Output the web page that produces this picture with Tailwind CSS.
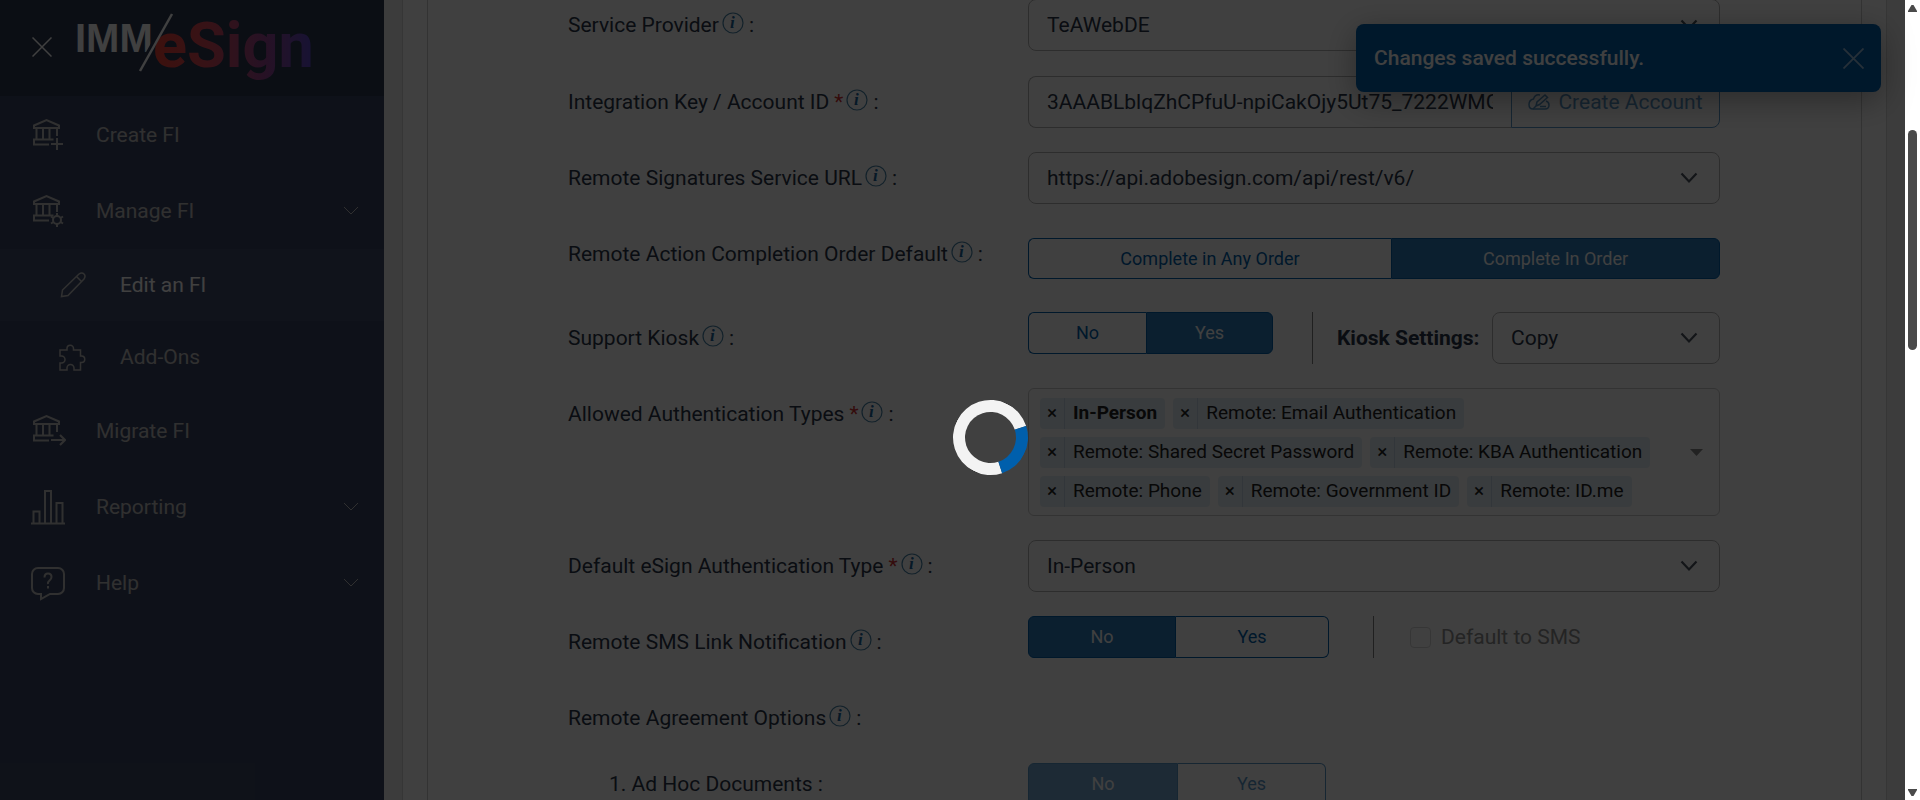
<!DOCTYPE html>
<html lang="en">
<head>
    <meta charset="UTF-8">
    <meta name="viewport" content="width=device-width, initial-scale=1.0">
    <title>IMM eSign - Edit an FI</title>
    <script src="https://cdn.jsdelivr.net/npm/@tailwindcss/browser@4"></script>
</head>
<body class="relative flex h-screen overflow-hidden bg-white font-['Roboto',sans-serif] text-[21px] leading-[24px] text-[#2b3648]">

    <!-- shared icons -->
    <svg class="hidden" aria-hidden="true">
        <symbol id="bank" viewBox="0 0 34 34" fill="none" stroke="currentColor" stroke-width="2">
            <path d="M2 10V7.500L14.500 2 27 7.500V10ZM4.500 10v11M11 10v11M17.500 10v11M25 10v8M2 21.500h19.500M2 20.500V26.500h15"/>
        </symbol>
        <symbol id="info" viewBox="0 0 22 22">
            <circle cx="11" cy="11" r="10" fill="none" stroke="#4a84a8" stroke-width="1.200"/>
            <text x="8" y="16" font-family="Liberation Serif, serif" font-style="italic" font-weight="bold" font-size="17" fill="#1a649a">i</text>
        </symbol>
        <symbol id="down" viewBox="0 0 18 12">
            <path d="M1.500 1.500 9 9.500l7.500-8" fill="none" stroke="#4c545f" stroke-width="2.200"/>
        </symbol>
        <symbol id="thin-down" viewBox="0 0 16 10">
            <path d="M1 1l7 7 7-7" fill="none" stroke="currentColor" stroke-width="1"/>
        </symbol>
    </svg>

    <!-- Sidebar -->
    <aside class="w-[384px] shrink-0 bg-[#3b4663] text-[#c0c0c0]">
        <div class="flex h-24 bg-[#2d3852]">
            <button class="mt-[37px] ml-8 size-5 text-white" aria-label="Close menu">
                <svg viewBox="0 0 20 20" class="size-5" fill="none" stroke="currentColor" stroke-width="1.500"><path d="M.5.5l19 19M19.500.5l-19 19"/></svg>
            </button>
            <svg class="ml-5 h-24 w-[252px]" viewBox="72 0 252 96" role="img" aria-label="IMM eSign">
                <defs>
                    <linearGradient id="brand" gradientUnits="userSpaceOnUse" x1="156" y1="0" x2="310" y2="0">
                        <stop offset="0" stop-color="#f04438"/>
                        <stop offset=".35" stop-color="#d84a5c"/>
                        <stop offset=".7" stop-color="#9a4690"/>
                        <stop offset="1" stop-color="#6048c8"/>
                    </linearGradient>
                </defs>
                <text x="75" y="52" font-family="Liberation Sans, Arial, sans-serif" font-weight="bold" font-size="40" fill="#fff">IMM</text>
                <path d="M172 14 140 71" stroke="#2d3852" stroke-width="8"/>
                <text x="153" y="67" font-family="Roboto, sans-serif" font-weight="700" font-size="63" fill="url(#brand)">eSign</text>
                <path d="M172 14 140 71" stroke="#fff" stroke-width="2.500"/>
            </svg>
        </div>
        <nav class="mt-px">
            <a href="#" class="flex h-[76px] items-center">
                <svg class="ml-8 size-[34px]" fill="none" stroke="currentColor" stroke-width="2"><use href="#bank"/><path d="M25 20v12M19 26h12"/></svg>
                <span class="ml-[30px]">Create FI</span>
            </a>
            <a href="#" class="flex h-[76px] items-center">
                <svg class="ml-8 size-[34px]" fill="none" stroke="currentColor" stroke-width="2"><use href="#bank"/><circle cx="25" cy="26" r="4"/><path d="M25 19v3M25 30v3M19 22.500l2.500 1.500M28.500 28l2.500 1.500M19 29.500l2.500-1.500M28.500 24l2.500-1.500"/></svg>
                <span class="ml-[30px] flex-1">Manage FI</span>
                <svg class="mr-[25px] h-[10px] w-4"><use href="#thin-down"/></svg>
            </a>
            <a href="#" class="flex h-[72px] items-center bg-[#424e6d]">
                <svg class="ml-[60px] size-[26px]" viewBox="0 0 26 26" fill="none" stroke="currentColor" stroke-width="1.500"><path d="M1.500 24.500l1-6.500L19 2q3-2 5 0t0 5L8 23.500ZM16.500 4.500l5 5"/></svg>
                <span class="ml-[34px] text-white">Edit an FI</span>
            </a>
            <a href="#" class="flex h-[72px] items-center">
                <svg class="ml-[59px] size-[27px]" viewBox="0 0 27 27" fill="none" stroke="currentColor" stroke-width="1.500"><path d="M1 6h7V4.500a3 3 0 0 1 6.500 0V6H21.500v6h1a3 3 0 0 1 0 6.500h-1V26H15v-2a3.500 3.500 0 0 0-7 0v2H1v-7h1.500a3.500 3.500 0 0 0 0-7H1Z"/></svg>
                <span class="ml-[34px]">Add-Ons</span>
            </a>
            <a href="#" class="flex h-[76px] items-center">
                <svg class="ml-8 size-[34px]" fill="none" stroke="currentColor" stroke-width="2"><use href="#bank"/><path d="M19 26h14M28 21l5 5-5 5"/></svg>
                <span class="ml-[30px]">Migrate FI</span>
            </a>
            <a href="#" class="flex h-[76px] items-center">
                <svg class="ml-[31px] size-[35px]" viewBox="0 0 35 35" fill="none" stroke="currentColor" stroke-width="2"><path d="M0 33.500h34M2.500 33V21.500h6V33M14 33V1h6v32M25.500 33V13h6v20"/></svg>
                <span class="ml-[30px] flex-1">Reporting</span>
                <svg class="mr-[25px] h-[10px] w-4"><use href="#thin-down"/></svg>
            </a>
            <a href="#" class="flex h-[76px] items-center">
                <svg class="ml-[31px] size-[35px]" viewBox="0 0 35 35" fill="none" stroke="currentColor" stroke-width="2"><path d="M7 2h20a6 6 0 0 1 6 6v14a6 6 0 0 1-6 6h-8l-9 5v-5H7a6 6 0 0 1-6-6V8a6 6 0 0 1 6-6Z"/><path d="M13.500 11.500q0-4 3.500-4t3.500 3.500q0 2-2 3.500t-1.500 3.500M17 20v2.500"/></svg>
                <span class="ml-[30px] flex-1">Help</span>
                <svg class="mr-[25px] h-[10px] w-4"><use href="#thin-down"/></svg>
            </a>
        </nav>
    </aside>

    <!-- Form -->
    <main class="h-full min-w-0 flex-1 overflow-hidden bg-[#f0f0f0] px-[18px]">
        <div class="h-full border-x border-[#d8d8d8] bg-white px-6">
            <form class="flex min-h-full flex-col gap-6 border-x border-[#cccccc] pr-px">

                <div class="-mt-px mb-px grid grid-cols-[460px_minmax(0,692px)] justify-center">
                    <label for="provider" class="flex h-[52px] items-center">Service Provider <svg class="mb-1 ml-[3px] size-[22px]"><use href="#info"/></svg><span class="ml-[5px]">:</span></label>
                    <div class="relative">
                        <select id="provider" class="h-[52px] w-full appearance-none rounded-lg border border-[#b4b4b4] px-[18px]"><option>TeAWebDE</option></select>
                        <svg class="pointer-events-none absolute top-5 right-[22px] h-3 w-[18px]"><use href="#down"/></svg>
                    </div>
                </div>

                <div class="grid grid-cols-[460px_minmax(0,692px)] justify-center">
                    <label for="key" class="flex h-[52px] items-center">Integration Key / Account ID <span class="ml-[5px] text-[#d03030]">*</span><svg class="mb-1 ml-[3px] size-[22px]"><use href="#info"/></svg><span class="ml-[5px]">:</span></label>
                    <div class="flex h-[52px]">
                        <div class="min-w-0 flex-1 rounded-l-lg border border-r-0 border-[#b4b4b4] px-[18px]">
                            <input id="key" type="text" value="3AAABLblqZhCPfuU-npiCakOjy5Ut75_7222WMGk8" class="h-[50px] w-full outline-none">
                        </div>
                        <button type="button" class="flex w-[209px] items-center justify-center gap-2 rounded-r-lg border border-[#005fac] text-[#005fac] opacity-65">
                            <svg class="h-[18px] w-[22px]" viewBox="0 0 22 18" fill="none" stroke="currentColor" stroke-width="1.500"><path d="M12 2Q7 1 5.500 6 1 7 1 11.500T5 16h12q4 0 4-4 0-3-3-4"/><path d="M8 13l1-4 8-7 2.500 2.500-8 7ZM5 16l3-3M12 13.500h6"/></svg>
                            Create Account
                        </button>
                    </div>
                </div>

                <div class="grid grid-cols-[460px_minmax(0,692px)] justify-center">
                    <label for="url" class="flex h-[52px] items-center">Remote Signatures Service URL <svg class="mb-1 ml-[3px] size-[22px]"><use href="#info"/></svg><span class="ml-[5px]">:</span></label>
                    <div class="relative">
                        <select id="url" class="h-[52px] w-full appearance-none rounded-lg border border-[#b4b4b4] px-[18px]"><option>https://api.adobesign.com/api/rest/v6/</option></select>
                        <svg class="pointer-events-none absolute top-5 right-[22px] h-3 w-[18px]"><use href="#down"/></svg>
                    </div>
                </div>

                <div class="grid h-[60px] grid-cols-[460px_minmax(0,692px)] justify-center">
                    <span id="order" class="flex h-[52px] items-center">Remote Action Completion Order Default <svg class="mb-1 ml-[3px] size-[22px]"><use href="#info"/></svg><span class="ml-[5px]">:</span></span>
                    <div role="group" aria-labelledby="order" class="mt-[10px] flex h-[41px] text-[18px]">
                        <button type="button" aria-pressed="false" class="w-[363px] rounded-l-md border border-r-0 border-[#005fac] text-[#005fac]">Complete in Any Order</button>
                        <button type="button" aria-pressed="true" class="flex-1 rounded-r-md border border-[#005fac] bg-[#2c7cbc] text-white">Complete In Order</button>
                    </div>
                </div>

                <div class="grid grid-cols-[460px_minmax(0,692px)] justify-center">
                    <span id="kiosk" class="flex h-[52px] items-center">Support Kiosk <svg class="mb-1 ml-[3px] size-[22px]"><use href="#info"/></svg><span class="ml-[5px]">:</span></span>
                    <div class="flex h-[52px]">
                        <div role="group" aria-labelledby="kiosk" class="flex h-[42px] text-[18px]">
                            <button type="button" aria-pressed="false" class="w-[118px] rounded-l-md border border-r-0 border-[#005fac] text-[#005fac]">No</button>
                            <button type="button" aria-pressed="true" class="w-[127px] rounded-r-md border border-[#005fac] bg-[#2c7cbc] text-white">Yes</button>
                        </div>
                        <div class="ml-[39px] w-px bg-[#808080]"></div>
                        <label for="kiosk-settings" class="ml-6 flex-1 self-center font-bold">Kiosk Settings:</label>
                        <div class="relative w-[228px]">
                            <select id="kiosk-settings" class="h-[52px] w-full appearance-none rounded-lg border border-[#b4b4b4] px-[18px]"><option>Copy</option></select>
                            <svg class="pointer-events-none absolute top-5 right-[22px] h-3 w-[18px]"><use href="#down"/></svg>
                        </div>
                    </div>
                </div>

                <div class="grid grid-cols-[460px_minmax(0,692px)] justify-center">
                    <span class="flex h-[52px] items-center">Allowed Authentication Types <span class="ml-[5px] text-[#d03030]">*</span><svg class="mb-1 ml-[3px] size-[22px]"><use href="#info"/></svg><span class="ml-[5px]">:</span></span>
                    <div class="flex h-32 items-center rounded-md border border-[#cccccc] py-2 pr-4 pl-[11px] text-[19px] text-[#222222]">
                        <div class="flex flex-1 flex-wrap gap-2">
                            <span class="flex h-[31px] items-center rounded bg-[#e4eef6]"><button type="button" class="h-full w-[25px] border-r border-[#c8d8e8]" aria-label="Remove">×</button><span class="px-2 font-bold">In-Person</span></span>
                            <span class="flex h-[31px] items-center rounded bg-[#e4eef6]"><button type="button" class="h-full w-[25px] border-r border-[#c8d8e8]" aria-label="Remove">×</button><span class="px-2">Remote: Email Authentication</span></span>
                            <span class="flex h-[31px] items-center rounded bg-[#e4eef6]"><button type="button" class="h-full w-[25px] border-r border-[#c8d8e8]" aria-label="Remove">×</button><span class="px-2">Remote: Shared Secret Password</span></span>
                            <span class="flex h-[31px] items-center rounded bg-[#e4eef6]"><button type="button" class="h-full w-[25px] border-r border-[#c8d8e8]" aria-label="Remove">×</button><span class="px-2">Remote: KBA Authentication</span></span>
                            <span class="flex h-[31px] items-center rounded bg-[#e4eef6]"><button type="button" class="h-full w-[25px] border-r border-[#c8d8e8]" aria-label="Remove">×</button><span class="px-2">Remote: Phone</span></span>
                            <span class="flex h-[31px] items-center rounded bg-[#e4eef6]"><button type="button" class="h-full w-[25px] border-r border-[#c8d8e8]" aria-label="Remove">×</button><span class="px-2">Remote: Government ID</span></span>
                            <span class="flex h-[31px] items-center rounded bg-[#e4eef6]"><button type="button" class="h-full w-[25px] border-r border-[#c8d8e8]" aria-label="Remove">×</button><span class="px-2">Remote: ID.me</span></span>
                        </div>
                        <svg class="h-[7px] w-[13px]" viewBox="0 0 13 7"><path d="M0 0h13L6.500 7Z" fill="#888"/></svg>
                    </div>
                </div>

                <div class="grid grid-cols-[460px_minmax(0,692px)] justify-center">
                    <label for="auth-type" class="flex h-[52px] items-center">Default eSign Authentication Type <span class="ml-[5px] text-[#d03030]">*</span><svg class="mb-1 ml-[3px] size-[22px]"><use href="#info"/></svg><span class="ml-[5px]">:</span></label>
                    <div class="relative">
                        <select id="auth-type" class="h-[52px] w-full appearance-none rounded-lg border border-[#b4b4b4] px-[18px]"><option>In-Person</option></select>
                        <svg class="pointer-events-none absolute top-5 right-[22px] h-3 w-[18px]"><use href="#down"/></svg>
                    </div>
                </div>

                <div class="grid grid-cols-[460px_minmax(0,692px)] justify-center">
                    <span id="sms" class="flex h-[52px] items-center">Remote SMS Link Notification <svg class="mb-1 ml-[3px] size-[22px]"><use href="#info"/></svg><span class="ml-[5px]">:</span></span>
                    <div class="flex h-[42px] items-center">
                        <div role="group" aria-labelledby="sms" class="flex h-[42px] text-[18px]">
                            <button type="button" aria-pressed="true" class="w-[148px] rounded-l-md border border-[#005fac] bg-[#2c7cbc] text-white">No</button>
                            <button type="button" aria-pressed="false" class="w-[153px] rounded-r-md border border-l-0 border-[#005fac] text-[#005fac]">Yes</button>
                        </div>
                        <div class="ml-11 h-full w-px bg-[#808080]"></div>
                        <input id="default-sms" type="checkbox" disabled class="ml-9 size-[21px] appearance-none rounded border border-[#d8d8d8]">
                        <label for="default-sms" class="ml-[10px] text-[#909090]">Default to SMS</label>
                    </div>
                </div>

                <div class="-mb-[5px] grid grid-cols-[460px_minmax(0,692px)] justify-center">
                    <span class="flex h-[52px] items-center">Remote Agreement Options <svg class="mb-1 ml-[3px] size-[22px]"><use href="#info"/></svg><span class="ml-[5px]">:</span></span>
                </div>

                <div class="grid grid-cols-[460px_minmax(0,692px)] justify-center">
                    <span id="adhoc" class="flex h-[42px] items-center pl-[41px]">1. Ad Hoc Documents :</span>
                    <div role="group" aria-labelledby="adhoc" class="flex h-[42px] text-[18px] opacity-65">
                        <button type="button" disabled class="w-[150px] rounded-l-md border border-[#005fac] bg-[#2c7cbc] text-white">No</button>
                        <button type="button" disabled class="w-[148px] rounded-r-md border border-l-0 border-[#005fac] text-[#005fac]">Yes</button>
                    </div>
                </div>
            </form>
        </div>
    </main>

    <!-- Toast -->
    <div role="status" class="absolute top-6 right-[39px] flex h-[68px] w-[525px] items-center justify-between rounded-lg bg-[#005fac] pr-[17px] pl-[18px] font-medium text-white shadow-[0_8px_32px_rgba(0,0,0,0.35)]">
        Changes saved successfully.
        <button type="button" aria-label="Dismiss" class="size-[21px] opacity-60">
            <svg viewBox="0 0 21 21" class="size-[21px]" fill="none" stroke="currentColor" stroke-width="1.800"><path d="M.5.5l20 20M20.500.5l-20 20"/></svg>
        </button>
    </div>

    <!-- Loading overlay -->
    <div class="absolute inset-y-0 right-[15px] left-0 bg-black/75">
        <div class="absolute top-1/2 left-1/2 size-[75px] rotate-[27deg] rounded-full border-[12px] border-[#f3f3f3] border-r-[#005fac]"></div>
    </div>

    <!-- Scrollbar -->
    <div class="flex w-[15px] shrink-0 flex-col items-center bg-white pt-[5px] pb-1" aria-hidden="true">
        <svg class="h-[7px] w-[9px]" viewBox="0 0 9 7"><path d="M0 7V6L3.500 0h2L9 6v1Z" fill="#4a4a4a"/></svg>
        <div class="mt-[118px] h-[220px] w-[9px] rounded-full bg-[#4a4a4a]"></div>
        <svg class="mt-auto h-[7px] w-[9px]" viewBox="0 0 9 7"><path d="M0 0V1L3.500 7h2L9 1V0Z" fill="#4a4a4a"/></svg>
    </div>
</body>
</html>
